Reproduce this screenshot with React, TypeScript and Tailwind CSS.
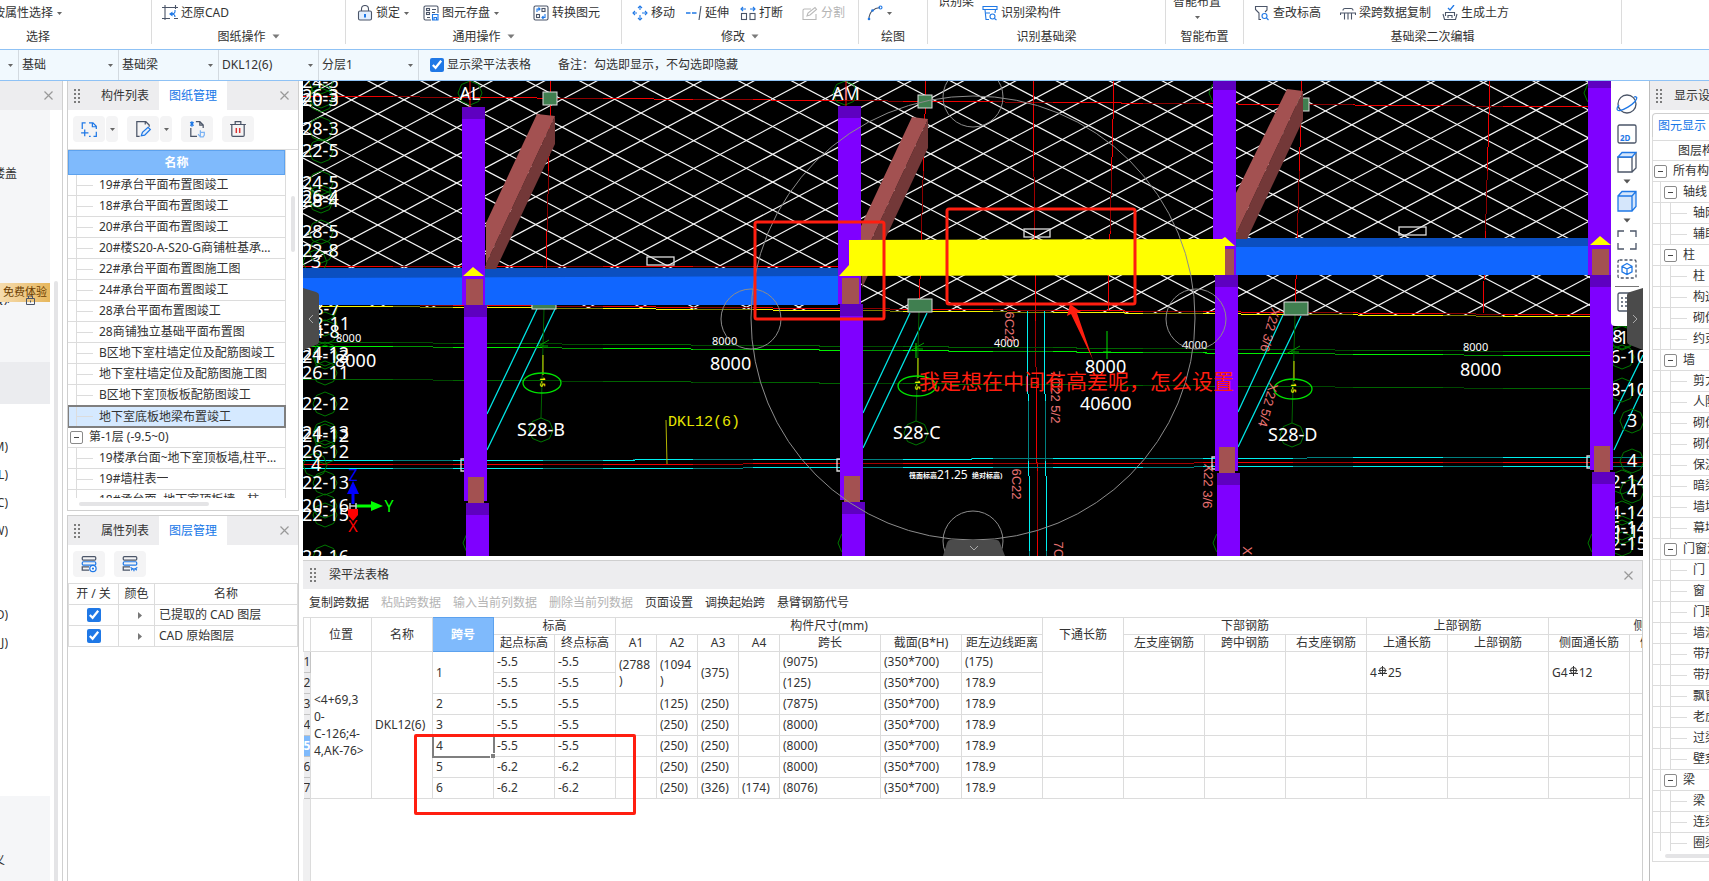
import { useState, ReactNode } from 'react';

type Point = [number, number];

const INK = '#4b5568';
const BLUE = '#1f78e6';

/* ---------- small shared pieces ---------- */

function Caret({ color = '#7a7a7a' }: { color?: string }) {
  return (
    <svg width="8" height="5" viewBox="0 0 8 5" className="shrink-0" aria-hidden="true">
      <path d="M0.5 0.5h7L4 4.5z" fill={color} />
    </svg>
  );
}

function SmallCaret() {
  return (
    <svg width="5" height="3" viewBox="0 0 5 3" className="shrink-0" aria-hidden="true">
      <path d="M0 0h5L2.5 3z" fill="#666" />
    </svg>
  );
}

function Grip() {
  return (
    <svg width="8" height="14" viewBox="0 0 8 14" className="shrink-0" aria-hidden="true">
      {[0, 4, 8, 12].map(y => (
        <g key={y} fill="#7c7c7c">
          <rect x="1" y={y} width="2" height="2" />
          <rect x="5" y={y} width="2" height="2" />
        </g>
      ))}
    </svg>
  );
}

function CloseButton() {
  return (
    <button aria-label="关闭" className="flex size-4 shrink-0 items-center justify-center">
      <svg width="9" height="9" viewBox="0 0 9 9" stroke="#999" strokeWidth="1.2">
        <path d="M0.5 0.5l8 8M8.5 0.5l-8 8" />
      </svg>
    </button>
  );
}

function Icon({ children, size = 16 }: { children: ReactNode; size?: number }) {
  return (
    <svg
      width={size}
      height={size}
      viewBox="0 0 16 16"
      fill="none"
      stroke={INK}
      strokeWidth="1.1"
      className="shrink-0"
      aria-hidden="true"
    >
      {children}
    </svg>
  );
}

/* ---------- icons ---------- */

const icons = {
  restore: (
    <Icon>
      <path d="M0 2.500h16M3 0v15M0 13.500h8M13.500 0v4M12 13.500h4" />
      <path d="M13 5v1.500Q13 9 9 9" stroke={BLUE} />
      <path d="M10.500 6.500v5L7 9z" fill={BLUE} stroke="none" />
      <path d="M10 9q3 0 3 3" stroke={BLUE} />
    </Icon>
  ),
  lock: (
    <Icon>
      <path d="M4.500 6V4a3.500 3.500 0 0 1 7 0v2" />
      <rect x="1.500" y="6" width="13" height="9" rx="1.500" fill="#e3effd" />
      <path d="M8 9v3.500" stroke={BLUE} strokeWidth="2" />
    </Icon>
  ),
  saveElement: (
    <Icon>
      <path d="M8 15H2.500A1.500 1.500 0 0 1 1 13.500v-11A1.500 1.500 0 0 1 2.500 1h11A1.500 1.500 0 0 1 15 2.500V8" />
      <rect x="3.500" y="3.500" width="3" height="2" />
      <rect x="3.500" y="7.500" width="3" height="2" />
      <path d="M9 4.500h4M9 7.500h3M4 12.500h3" />
      <path d="M9.500 9.500h5.500v5.500H9.500zM11 15v-2.500h2.500V15" stroke={BLUE} />
    </Icon>
  ),
  convert: (
    <Icon>
      <rect x="1" y="1" width="14" height="14" rx="1.500" />
      <rect x="9" y="3.500" width="3" height="3" />
      <rect x="3.500" y="9.500" width="3" height="3" />
      <path d="M4 7V4h3M5.500 2.500L7 4 5.500 5.500M12 9v3.500H9M10.500 11L9 12.500 10.500 14" stroke={BLUE} />
    </Icon>
  ),
  move: (
    <Icon>
      <g stroke={BLUE}>
        <path d="M8 1v5M8 10v5M1 8h5M10 8h5" strokeDasharray="4 1" />
        <path d="M6 3l2-2 2 2M6 13l2 2 2-2M3 6L1 8l2 2M13 6l2 2-2 2" />
      </g>
    </Icon>
  ),
  extend: (
    <Icon>
      <path d="M0 8h4.500M6 8h4.500" stroke={BLUE} strokeWidth="1.300" />
      <path d="M15 1l-2 14" />
    </Icon>
  ),
  split: (
    <Icon>
      <rect x="1.500" y="8.500" width="5" height="6" />
      <rect x="10" y="8.500" width="5" height="6" />
      <path d="M1 4h5M3 2L1 4l2 2M10 4h5M13 2l2 2-2 2" stroke={BLUE} />
    </Icon>
  ),
  divide: (
    <Icon>
      <g stroke="#b9b9b9">
        <path d="M9 4H2.500A1.500 1.500 0 0 0 1 5.500v9h13V9" />
        <path d="M5 11l1-3 7-5.500 1.500 2L8 10z" />
      </g>
    </Icon>
  ),
  arc: (
    <Icon>
      <path d="M2 14C2 7 7 3 13 2.500" />
      <circle cx="2" cy="14" r="1.300" fill={BLUE} stroke="none" />
      <circle cx="5.500" cy="5.500" r="1.300" fill={BLUE} stroke="none" />
      <circle cx="13.500" cy="2.500" r="1.500" stroke={BLUE} />
    </Icon>
  ),
  identify: (
    <Icon>
      <g stroke={BLUE}>
        <path d="M1 1.500h14v3H1zM3 4.500l1 10h3M13.500 4.500L13 8M4 8h4" />
        <circle cx="10.500" cy="11.500" r="2.500" />
        <path d="M12.500 13.500l2 1.500" />
      </g>
    </Icon>
  ),
  elevation: (
    <Icon>
      <path d="M7 14.500H5V8L1.500 4.500v-3H13V5L11 7" />
      <circle cx="10.500" cy="11" r="2.500" stroke={BLUE} />
      <path d="M12.500 13l2 2" stroke={BLUE} />
    </Icon>
  ),
  copySpan: (
    <Icon>
      <path d="M0.500 10V8h15v2M3 5.500q0-2 2-2h6q2 0 2 2M4.500 14.500V8M11.500 14.500V8M8 14.500V8" />
    </Icon>
  ),
  earth: (
    <Icon>
      <path d="M1 9l1.500 5.500h11L15 9M3.500 11V7.500h9V11M6 13v-2.500h4V13" />
      <path d="M6 3l2 2 4-5" stroke={BLUE} strokeWidth="1.300" />
    </Icon>
  ),
  addDrawing: (
    <Icon size={18}>
      <g stroke={BLUE}>
        <path d="M2 8V2.500h3M8 2.500h3.500L14.500 5.500V8M14.500 10.500v4H12M9.500 14.500H8M11 2.500v3.500h3.500M1 11.500h6.500M4.200 8.500v6" />
      </g>
    </Icon>
  ),
  editDrawing: (
    <Icon size={18}>
      <path d="M5 14.500H2.500v-13h8l3 3V6M10 1.500V4" />
      <path d="M6.500 14l1-3 5-4.500 2 2-5 5z" stroke={BLUE} fill="#e3effd" />
    </Icon>
  ),
  locate: (
    <Icon size={18}>
      <path d="M2.500 7v7.500H8M7 1.500h3.500l3 3V7M10.500 1.500v3h3" />
      <path d="M2 2l3 3M5 2L2 5M3.500 1v5" stroke={BLUE} />
      <path d="M10.500 14.500l-1.500-2M11 9v4M11 11h3.500v2.500l-1 1.500h-2.500z" stroke="#7db4f4" />
    </Icon>
  ),
  trash: (
    <Icon size={18}>
      <path d="M1 4h14M5.500 4V1.500h5V4M2.500 4v9.500a1 1 0 0 0 1 1h9a1 1 0 0 0 1-1V4" />
      <path d="M6.500 7v4.500M9.500 7v4.500" stroke="#d33" strokeWidth="1.300" />
    </Icon>
  ),
  layerOne: (
    <Icon size={18}>
      <rect x="2" y="1.500" width="12" height="3" rx="1" />
      <rect x="2" y="6" width="12" height="3" rx="1" stroke={BLUE} />
      <path d="M8 13.500H2v-3h6" />
      <circle cx="11.500" cy="12" r="2.800" stroke={BLUE} fill="#fff" />
      <circle cx="11.500" cy="12" r="1" fill={BLUE} stroke="none" />
    </Icon>
  ),
  layerTwo: (
    <Icon size={18}>
      <rect x="2" y="1.500" width="12" height="3" rx="1" />
      <rect x="2" y="6" width="12" height="3" rx="1" stroke={BLUE} />
      <path d="M8 13.500H2v-3h6" />
      <path d="M8.500 11q3 3 6 0M9 13.500l1-1M11.500 14.500v-2M14 13.500l-1-1" stroke={BLUE} />
    </Icon>
  )
};

/* ---------- ribbon ---------- */

function Tool({ icon, text, caret, muted }: { icon: ReactNode; text?: string; caret?: boolean; muted?: boolean }) {
  return (
    <button className={`flex shrink-0 items-center gap-[3px] whitespace-nowrap ${muted ? 'text-[#b4b4b4]' : ''}`}>
      {icon}
      {text}
      {caret && <span className="pl-px"><SmallCaret /></span>}
    </button>
  );
}

function RibbonGroup({ width, label, caret, children }: { width: string; label: string; caret?: boolean; children: ReactNode }) {
  return (
    <>
      <section className={`flex shrink-0 flex-col ${width}`}>
        <div className="flex h-[26px] items-center">{children}</div>
        <div className="flex h-[21px] items-center justify-center gap-1.5">
          {label}
          {caret && <Caret />}
        </div>
      </section>
      <div className="h-11 w-px shrink-0 bg-[#dcdcdc]" />
    </>
  );
}

function Ribbon() {
  return (
    <header className="flex h-[50px] shrink-0 overflow-hidden border-b border-[#8fc2f5] bg-white">
      <RibbonGroup width="-ml-[75px] w-[226px]" label="选择">
        <button className="flex w-[137px] items-center justify-end gap-1 whitespace-nowrap">按属性选择<SmallCaret /></button>
      </RibbonGroup>
      <RibbonGroup width="w-[193px]" label="图纸操作" caret>
        <div className="pl-2.5"><Tool icon={icons.restore} text="还原CAD" /></div>
      </RibbonGroup>
      <RibbonGroup width="w-[275px]" label="通用操作" caret>
        <div className="flex items-center gap-3.5 pl-[11px]">
          <Tool icon={icons.lock} text="锁定" caret />
          <Tool icon={icons.saveElement} text="图元存盘" caret />
          <div className="pl-5"><Tool icon={icons.convert} text="转换图元" /></div>
        </div>
      </RibbonGroup>
      <RibbonGroup width="w-[236px]" label="修改" caret>
        <div className="flex items-center gap-[11px] pl-2.5">
          <Tool icon={icons.move} text="移动" />
          <Tool icon={icons.extend} text="延伸" />
          <Tool icon={icons.split} text="打断" />
          <div className="pl-2"><Tool icon={icons.divide} text="分割" muted /></div>
        </div>
      </RibbonGroup>
      <RibbonGroup width="w-[68px]" label="绘图">
        <div className="pl-2"><Tool icon={icons.arc} caret /></div>
      </RibbonGroup>
      <RibbonGroup width="w-[237px]" label="识别基础梁">
        <button className="-mt-1.5 ml-2.5 self-start leading-4">识别梁</button>
        <div className="pl-2"><Tool icon={icons.identify} text="识别梁构件" /></div>
      </RibbonGroup>
      <RibbonGroup width="w-[77px]" label="智能布置">
        <button className="-mt-1.5 ml-[7px] flex flex-col items-center gap-1.5 self-start leading-4">
          智能布置
          <SmallCaret />
        </button>
      </RibbonGroup>
      <RibbonGroup width="w-[377px]" label="基础梁二次编辑">
        <div className="flex items-center gap-[11px] pl-2.5">
          <Tool icon={icons.elevation} text="查改标高" />
          <div className="pl-2"><Tool icon={icons.copySpan} text="梁跨数据复制" /></div>
          <Tool icon={icons.earth} text="生成土方" />
        </div>
      </RibbonGroup>
    </header>
  );
}

const FILTERS = [
  { label: '楼层', value: '基础' },
  { label: '构件类型', value: '基础梁' },
  { label: '构件', value: 'DKL12(6)' },
  { label: '分层', value: '分层1' }
];

function FilterBar() {
  const [showTable, setShowTable] = useState(true);
  return (
    <div className="flex h-[31px] shrink-0 items-stretch border-b border-[#8fc2f5] bg-[#f1f9fe]">
      <div className="flex w-[19px] items-center justify-end border-r border-[#d3dae0] pr-[5px]"><SmallCaret /></div>
      {FILTERS.map(f => (
        <div key={f.label} className="flex w-[100px] items-center border-r border-[#d3dae0] pr-[5px] pl-[3px]">
          <select aria-label={f.label} className="w-full appearance-none bg-transparent outline-none">
            <option>{f.value}</option>
          </select>
          <SmallCaret />
        </div>
      ))}
      <label className="flex items-center gap-[3px] pl-[11px]">
        <input
          type="checkbox"
          checked={showTable}
          onChange={e => setShowTable(e.target.checked)}
          className="size-3.5 accent-[#1f78e6]"
        />
        显示梁平法表格
      </label>
      <span className="flex items-center pl-[27px]">备注：勾选即显示，不勾选即隐藏</span>
    </div>
  );
}

/* ---------- left side ---------- */

const NAV_TAILS = ['(M)', '(L)', '(C)', '(W)', '', '', '(D)', '(J)'];

function NavStrip() {
  return (
    <aside className="flex w-[63px] shrink-0 flex-col border-r border-[#d0d0d0] bg-white">
      <div className="flex h-[29px] shrink-0 items-center justify-end bg-[#ededef] pr-1.5">
        <CloseButton />
      </div>
      <div className="flex flex-1 justify-between pr-1">
        <div className="flex w-[50px] flex-col">
          <div className="flex h-[252px] shrink-0 flex-col bg-[#f5f6f8] pt-14">
            <div className="flex w-[17px] justify-end overflow-hidden leading-4 whitespace-nowrap">现浇楼盖</div>
            <div className="relative mt-[101px] flex h-[19px] items-center bg-linear-to-r from-[#f6dcae] to-[#e6b65a] pl-[3px] whitespace-nowrap text-[#6b3d00]">
              <span className="text-[11px]">免费体验</span>
              <svg width="9" height="10" viewBox="0 0 9 10" className="absolute top-3 left-[26px]" fill="none" stroke={INK}>
                <path d="M0.500 3.500h8v6h-8zM2.500 3.500V1h4v2.500M4.500 5.500v2" />
              </svg>
            </div>
            <div className="flex h-[5px] w-3 items-end justify-end overflow-hidden leading-4">Q)/</div>
          </div>
          <div className="h-[42px] shrink-0 bg-[#ebecef]" />
          <div className="flex flex-1 flex-col pt-[29px]">
            {NAV_TAILS.map((tail, i) => (
              <div key={i} className="flex h-7 w-2 items-center justify-end overflow-hidden">{tail}</div>
            ))}
          </div>
          <div className="flex h-[85px] shrink-0 items-end bg-[#f5f6f8] pb-3">
            <span className="flex w-[5px] justify-end overflow-hidden whitespace-nowrap">自定义</span>
          </div>
        </div>
        <div className="mt-[171px] w-1 rounded-t bg-[#e4e4e6]" />
      </div>
    </aside>
  );
}

function PanelTabs({ tabs, active }: { tabs: string[]; active: number }) {
  return (
    <div className="flex h-[29px] shrink-0 items-center bg-[#ededef] pr-1.5 pl-[5px]">
      <Grip />
      <div className="ml-2.5 flex flex-1 self-stretch">
        {tabs.map((tab, i) => (
          <button
            key={tab}
            className={i === active ? 'w-[68px] bg-white text-[#1677e8]' : 'w-[68px]'}
          >
            {tab}
          </button>
        ))}
      </div>
      <CloseButton />
    </div>
  );
}

function IconButton({ icon, label, caret }: { icon: ReactNode; label: string; caret?: boolean }) {
  return (
    <div className="flex gap-px">
      <button aria-label={label} className="flex h-[26px] w-8 items-center justify-center rounded-sm bg-[#f4f4f5]">{icon}</button>
      {caret && (
        <button aria-label={`${label}选项`} className="flex h-[26px] w-3 items-center justify-center rounded-sm bg-[#f4f4f5]">
          <SmallCaret />
        </button>
      )}
    </div>
  );
}

function Expander() {
  return (
    <span className="flex size-[13px] shrink-0 items-center justify-center rounded-xs border border-[#8a8a8a] bg-white">
      <span className="h-px w-[5px] bg-[#444]" />
    </span>
  );
}

const DRAWINGS = [
  '19#承台平面布置图竣工',
  '18#承台平面布置图竣工',
  '20#承台平面布置图竣工',
  '20#楼S20-A-S20-G商铺桩基承台平面布置图',
  '22#承台平面布置图施工图',
  '24#承台平面布置图竣工',
  '28承台平面布置图竣工',
  '28商铺独立基础平面布置图',
  'B区地下室柱墙定位及配筋图竣工',
  '地下室柱墙定位及配筋图施工图',
  'B区地下室顶板板配筋图竣工',
  '地下室底板地梁布置竣工'
];

const UPPER_DRAWINGS = ['19楼承台面~地下室顶板墙,柱平面布置图', '19#墙柱表一', '18#承台面~地下室顶板墙，柱'];

function DrawingRow({ name, selected, onSelect }: { name: string; selected?: boolean; onSelect?: () => void }) {
  return (
    <li
      onClick={onSelect}
      className={`flex h-[21px] shrink-0 items-center pr-1 pl-2 ${
        selected ? 'bg-[#d5e9ff] outline-2 -outline-offset-1 outline-[#7f7f7f]' : 'border-b border-[#dcdcdc]'
      }`}
    >
      <span className="flex h-full w-[23px] shrink-0 items-center border-l border-[#dcdcdc]">
        <span className="h-px w-4 bg-[#dcdcdc]" />
      </span>
      <span className="truncate">{name}</span>
    </li>
  );
}

function DrawingPanel() {
  const [selected, setSelected] = useState('地下室底板地梁布置竣工');
  return (
    <section className="flex h-[430px] flex-col border border-t-0 border-[#cfcfcf] bg-white">
      <PanelTabs tabs={['构件列表', '图纸管理']} active={1} />
      <div className="flex h-10 shrink-0 items-start gap-[9px] border-b border-[#dcdcdc] pt-1.5 pl-[5px]">
        <IconButton icon={icons.addDrawing} label="添加图纸" caret />
        <IconButton icon={icons.editDrawing} label="编辑图纸" caret />
        <IconButton icon={icons.locate} label="定位图纸" />
        <IconButton icon={icons.trash} label="删除图纸" />
      </div>
      <div className="flex h-[348px] shrink-0 overflow-hidden">
        <div className="flex w-[218px] flex-col border-r border-[#dcdcdc]">
          <div className="flex h-[25px] shrink-0 items-center justify-center border border-[#5da2ee] bg-[#7fbafc] font-bold text-white">名称</div>
          <ul className="flex flex-col">
            {DRAWINGS.map(name => (
              <DrawingRow key={name} name={name} selected={name === selected} onSelect={() => setSelected(name)} />
            ))}
            <li className="flex h-[21px] shrink-0 items-center gap-1.5 border-b border-[#dcdcdc] pl-0.5">
              <Expander />
              第-1层 (-9.5~0)
            </li>
            {UPPER_DRAWINGS.map(name => <DrawingRow key={name} name={name} />)}
          </ul>
        </div>
        <div className="mt-[46px] ml-[5px] h-14 w-1 rounded bg-[#e4e4e6]" />
      </div>
      <div className="mt-1 ml-[11px] h-1 w-[130px] rounded bg-[#e4e4e6]" />
    </section>
  );
}

function LayerPanel() {
  return (
    <section className="flex flex-1 flex-col border border-b-0 border-[#cfcfcf] bg-white">
      <PanelTabs tabs={['属性列表', '图层管理']} active={1} />
      <div className="flex h-[38px] shrink-0 items-center gap-[9px] pl-[5px]">
        <IconButton icon={icons.layerOne} label="图层显示" />
        <IconButton icon={icons.layerTwo} label="图层隐藏" />
      </div>
      <table className="w-full table-fixed border-collapse text-left">
        <thead>
          <tr className="h-[21px]">
            <th className="w-[50px] border border-[#dcdcdc] text-center font-normal">开 / 关</th>
            <th className="w-9 border border-[#dcdcdc] text-center font-normal">颜色</th>
            <th className="border border-[#dcdcdc] text-center font-normal">名称</th>
          </tr>
        </thead>
        <tbody>
          {['已提取的 CAD 图层', 'CAD 原始图层'].map(name => (
            <tr key={name} className="h-[21px]">
              <td className="border border-[#dcdcdc]">
                <input type="checkbox" defaultChecked aria-label={name} className="mx-auto block size-3.5 accent-[#1f78e6]" />
              </td>
              <td className="border border-[#dcdcdc]">
                <svg width="4" height="7" viewBox="0 0 4 7" className="ml-[19px]"><path d="M0 0l4 3.500L0 7z" fill="#777" /></svg>
              </td>
              <td className="border border-[#dcdcdc] pl-1">{name}</td>
            </tr>
          ))}
        </tbody>
      </table>
    </section>
  );
}

/* ---------- model view ---------- */

const octagon = (cx: number, cy: number, r = 12) =>
  Array.from({ length: 8 }, (_, i) => {
    const a = (i * Math.PI) / 4;
    return `${(cx + r * Math.sin(a)).toFixed(1)},${(cy - r * Math.cos(a)).toFixed(1)}`;
  }).join(' ');

// CAD line: dark base with brighter stretches on top
function CadLine({ from, to, dark, bright }: { from: Point; to: Point; dark: string; bright: string }) {
  const p = { x1: from[0], y1: from[1], x2: to[0], y2: to[1], shapeRendering: 'crispEdges' };
  return (
    <>
      <line {...p} stroke={dark} />
      <line {...p} stroke={bright} strokeDasharray="90 60" />
    </>
  );
}

const HATCH_STEPS = Array.from({ length: 50 }, (_, i) => i - 22);
const hatchY = (x: number, slope: number, k: number) => 127 + slope * (x - 614.7) + 27.8 * k;

const COLUMNS = [
  { x: 462, top: 107, cap: 12, joint: 305, base: 503 },
  { x: 838, top: 106, cap: 12, joint: 304, base: 502 },
  { x: 1213, top: 81, cap: 9, joint: 275, base: 473 },
  { x: 1588, top: 81, cap: 7, joint: 275, base: 472 }
];

const BRACES = [
  { light: '537,114 555,116 486,264 486,223', dark: '555,116 555,144 496,269 485,269 486,264' },
  { light: '912,117 928,119 861,262 861,226', dark: '928,119 928,148 862,288 861,262' },
  { light: '1287,89 1303,91 1236,234 1236,193', dark: '1303,91 1303,120 1247,239 1236,239 1236,234' }
];

const PIERS = [
  { x: 543, y: 309, name: 'S28-B', tx: 517, oy: 430 },
  { x: 918, y: 312, name: 'S28-C', tx: 893, oy: 433 },
  { x: 1294, y: 315, name: 'S28-D', tx: 1268, oy: 435 }
];

const LEFT_MARKS: [number, number, string][] = [
  [302, 82, '24-3'], [302, 96, '26-3'], [302, 100, '20-3'], [302, 129, '28-3'], [302, 151, '22-5'],
  [302, 183, '24-5'], [302, 197, '26-4'], [302, 201, '28-4'], [302, 232, '28-5'], [302, 251, '22-8'],
  [311, 262, '3'], [303, 309, '28-7'], [303, 324, '22-11'], [303, 332, '24-8'],
  [302, 354, '24-12'], [302, 357, '21-13'], [302, 373, '26-11'], [302, 404, '22-12'], [302, 433, '24-13'],
  [302, 436, '21-12'], [302, 452, '26-12'], [311, 465, '4'], [302, 483, '22-13'], [302, 506, '20-16'],
  [302, 515, '22-15'], [302, 557, '22-16']
];

const RIGHT_MARKS: [number, number, string][] = [
  [1592, 338, '24-16'], [1602, 337, '18'], [1600, 357, '26-10'], [1600, 390, '28-10'], [1627, 421, '3'], [1627, 461, '4'],
  [1600, 482, '22-14'], [1627, 491, '4'], [1600, 513, '24-14'], [1600, 528, '26-14'], [1602, 532, '21-13'], [1600, 544, '22-15']
];

const BIG_DIMS: [number, number, string][] = [
  [335, 361, '8000'], [710, 364, '8000'], [1085, 367, '8000'], [1080, 404, '40600'], [1460, 370, '8000']
];

const SMALL_DIMS: [number, number, string][] = [
  [336, 338, '8000'], [712, 341, '8000'], [994, 343, '4000'], [1182, 345, '4000'], [1463, 347, '8000']
];

const BAR_NOTES: [number, number, string, number][] = [
  [1009, 327, '6C22', 90], [1016, 484, '6C22', 90], [1058, 557, '7C22', 90], [1055, 397, '7C22 5/2', 90],
  [1270, 330, 'X22 3/6', 105], [1268, 405, 'X22 5/4', 105], [1208, 486, 'X22 3/6', 92], [1247, 558, 'X22', 92]
];

function ModelDrawing() {
  return (
    <svg
      viewBox="303 81 1340 475"
      preserveAspectRatio="xMinYMin slice"
      className="block size-full font-['Noto_Sans','Noto_Sans_CJK_SC',sans-serif]"
      role="img"
      aria-label="基础梁三维视图"
    >
      <defs>
        <clipPath id="slab"><path d="M303 81H1590L1594 317L303 306Z" /></clipPath>
      </defs>

      <g clipPath="url(#slab)" stroke="#f6f6f6" strokeWidth="1.200">
        {HATCH_STEPS.map(k => (
          <g key={k}>
            <line x1="303" y1={hatchY(303, 0.525, k)} x2="1600" y2={hatchY(1600, 0.525, k)} />
            <line x1="303" y1={hatchY(303, -0.531, k)} x2="1600" y2={hatchY(1600, -0.531, k)} />
          </g>
        ))}
      </g>

      {/* axis grid */}
      <CadLine from={[303, 96]} to={[1588, 107]} dark="#8c0000" bright="#f00000" />
      <CadLine from={[303, 267]} to={[838, 266]} dark="#8c0000" bright="#f00000" />
      <CadLine from={[551, 81]} to={[546, 269]} dark="#8c0000" bright="#f00000" />
      <CadLine from={[926, 81]} to={[919, 312]} dark="#8c0000" bright="#f00000" />
      <CadLine from={[1033, 81]} to={[1038, 556]} dark="#a00000" bright="#f00000" />
      <CadLine from={[1114, 81]} to={[1108, 311]} dark="#8c0000" bright="#f00000" />
      <CadLine from={[1302, 81]} to={[1295, 312]} dark="#8c0000" bright="#f00000" />
      <CadLine from={[1490, 81]} to={[1483, 314]} dark="#8c0000" bright="#f00000" />
      <CadLine from={[303, 304]} to={[1592, 315]} dark="#8c0000" bright="#f00000" />
      <CadLine from={[303, 306]} to={[1592, 317]} dark="#808000" bright="#f5f500" />
      <CadLine from={[303, 342]} to={[1592, 352]} dark="#004c00" bright="#006400" />
      <CadLine from={[303, 346]} to={[1592, 356]} dark="#009600" bright="#00f000" />
      <CadLine from={[303, 379]} to={[1592, 389]} dark="#004600" bright="#006400" />
      <CadLine from={[303, 461]} to={[1643, 457]} dark="#008080" bright="#00f0f0" />
      <CadLine from={[303, 465]} to={[1643, 462]} dark="#a00000" bright="#f00000" />
      <CadLine from={[303, 469]} to={[1643, 466]} dark="#008080" bright="#00f0f0" />
      <CadLine from={[1027, 311]} to={[1030, 556]} dark="#008080" bright="#00f0f0" />
      <CadLine from={[1044, 311]} to={[1047, 556]} dark="#008080" bright="#00f0f0" />

      <g stroke="#00e4e4" strokeWidth="1.300">
        <path d="M537 309L487 414M555 309L487 450M910 313L863 413M927 313L863 448" />
        <path d="M1283 315L1238 412M1301 316L1238 447M1643 355L1614 414M1643 388L1614 450" />
      </g>

      {/* pier axes */}
      {PIERS.map(p => (
        <g key={p.name}>
          <line x1={p.x + 1} y1={p.y} x2={p.x - 2} y2={p.oy - 12} stroke="#006400" />
          <path d={`M${p.x - 8} ${p.y + 39}l14 -8M${p.x - 3} ${p.y + 37}h8`} stroke="#00a000" />
          <line x1={p.x} y1={p.y + 46} x2={p.x} y2={p.y + 66} stroke="#dede00" />
          <ellipse cx={p.x - 1} cy={p.y + 74} rx="19" ry="10" fill="none" stroke="#00e000" strokeWidth="1.300" />
          <text x={p.x - 1} y={p.y + 73} fontSize="7" fontWeight="700" fill="#f0f000" textAnchor="middle" dominantBaseline="central" transform={`rotate(90 ${p.x - 1} ${p.y + 73})`}>1-5</text>
          <polygon points={octagon(p.x - 2, p.oy)} fill="none" stroke="#007800" />
          <text x={p.tx} y={p.oy} dy="6" fontSize="18" fill="#fff">{p.name}</text>
        </g>
      ))}
      <path d="M1107 331V359M1103 352h8M916 343V358" stroke="#00e000" />

      {/* axis bubbles */}
      <g fill="none" stroke="#007800">
        {LEFT_MARKS.map(([x, y]) => <polygon key={`${x}-${y}`} points={octagon(x === 311 ? 315 : y > 300 ? 325 : 321, y)} />)}
        {RIGHT_MARKS.map(([x, y]) => <polygon key={`${x}-${y}`} points={octagon(x === 1627 ? 1632 : 1622, y)} />)}
        <polygon points={octagon(470, 93)} />
        <polygon points={octagon(845, 93)} />
        <polygon points={octagon(1221, 93)} />
        <polygon points={octagon(1596, 93)} />
        <polygon points={octagon(475, 543)} />
        <polygon points={octagon(850, 543)} />
        <polygon points={octagon(1225, 543)} />
        <polygon points={octagon(1600, 543)} />
      </g>
      <g fill="#fff" fontSize="18">
        {[...LEFT_MARKS, ...RIGHT_MARKS].map(([x, y, t]) => <text key={`${x}-${y}`} x={x} y={y} dy="6">{t}</text>)}
        <text x="470" y="100" textAnchor="middle">AL</text>
        <text x="846" y="100" textAnchor="middle">AM</text>
        {BIG_DIMS.map(([x, y, t]) => <text key={`${x}-${y}`} x={x} y={y} dy="6">{t}</text>)}
      </g>
      <g fill="#fff" fontSize="11">
        {SMALL_DIMS.map(([x, y, t]) => <text key={`${x}-${y}`} x={x} y={y} dy="4">{t}</text>)}
        <text x="909" y="478" fontSize="7" fontWeight="700">筏面标高</text>
        <text x="937" y="479" fontSize="12">21.25</text>
        <text x="972" y="478" fontSize="7" fontWeight="700">绝对标高)</text>
      </g>
      <path d="M470 81v26M846 81v26" stroke="#f00000" />

      <line x1="666" y1="420" x2="667" y2="464" stroke="#b4b400" />
      <text x="668" y="426" fontSize="15" fill="#e6e600" className="font-['Liberation_Mono',monospace]">DKL12(6)</text>

      <g fill="#e87272" fontSize="13" textAnchor="middle" className="font-['Liberation_Sans_Narrow','Liberation_Sans',sans-serif]">
        {BAR_NOTES.map(([x, y, t, r]) => (
          <text key={`${x}-${y}`} x={x} y={y} dominantBaseline="central" transform={`rotate(${r} ${x} ${y})`}>{t}</text>
        ))}
      </g>

      {/* column heads */}
      <g fill="#407f50" stroke="#dcdcdc">
        <rect x="543" y="92" width="14" height="13" />
        <rect x="918" y="95" width="14" height="13" />
        <rect x="1297" y="98" width="12" height="13" />
        <rect x="532" y="300" width="24" height="9" />
        <rect x="908" y="299" width="24" height="13" />
        <rect x="1284" y="302" width="24" height="13" />
      </g>
      <g fill="none" stroke="#dcdcdc" strokeWidth="1.300">
        <rect x="647" y="257" width="27" height="8" />
        <rect x="1024" y="229" width="26" height="8" />
        <rect x="1399" y="227" width="27" height="8" />
        <path d="M464 459h-3v12h3M840 459h-3v12h3M1215 457h-3v12h3M1590 456h-3v12h3" />
      </g>

      {/* beams */}
      <path d="M303 268H838V305H303Z" fill="#1066ff" />
      <path d="M303 268H838V276L303 278Z" fill="#0b4fc0" />
      <path d="M1236 238H1588V275H1236Z" fill="#1066ff" />
      <path d="M1236 238H1588V246L1236 247Z" fill="#0b4fc0" />

      {BRACES.map(b => (
        <g key={b.light}>
          <polygon points={b.dark} fill="#733838" />
          <polygon points={b.light} fill="#a35151" />
        </g>
      ))}

      {COLUMNS.map(c => (
        <g key={c.x} fill="#7f00ff">
          <rect x={c.x} y={c.top} width="23" height={c.joint - c.top} />
          <rect x={c.x} y={c.top} width="23" height={c.cap} fill="#5e00c0" />
          <rect x={c.x + 4} y={c.joint - 26} width="17" height="26" fill="#a35151" />
          <rect x={c.x + 2} y={c.joint} width="23" height={c.base - c.joint - 2} />
          <rect x={c.x + 2} y={c.joint} width="23" height="12" fill="#5e00c0" />
          <rect x={c.x + 6} y={c.base - 26} width="16" height="26" fill="#a35151" />
          <rect x={c.x + 4} y={c.base} width="23" height={556 - c.base} />
          <rect x={c.x + 4} y={c.base} width="23" height="12" fill="#5e00c0" />
        </g>
      ))}
      <path d="M463 276L473 267L484 276Z M1590 245L1600 236L1611 245Z" fill="#ff0" />
      <path d="M849 240L1222 239L1225 237L1235 246H1225V275L839 276L849 265Z" fill="#ff0" />

      {/* orbit ring */}
      <g fill="none" stroke="#8c8c8c">
        <circle cx="973" cy="318" r="222" />
        <circle cx="751" cy="319" r="30" />
        <circle cx="1196" cy="319" r="30" />
        <circle cx="973" cy="97" r="30" />
        <circle cx="973" cy="541" r="30" />
      </g>

      {/* axis gizmo */}
      <g strokeWidth="3">
        <path d="M353 504V490" stroke="#00f" />
        <path d="M353 481L359 494H347Z" fill="#00f" />
        <path d="M355 506H373" stroke="#0f0" />
        <path d="M371 501L383 506L371 511Z" fill="#0f0" />
        <path d="M348 509L358 509L358 515L353 521L348 515Z" fill="#f00" />
        <path d="M350 503v6M356 503v6M350 506h6" stroke="#c8c8c8" strokeWidth="1.500" />
      </g>
      <g fontSize="16" textAnchor="middle">
        <text x="353" y="481" fill="#00f">Z</text>
        <text x="389" y="512" fill="#0f0">Y</text>
        <text x="353" y="532" fill="#f00">X</text>
      </g>

      {/* review marks */}
      <g fill="none" stroke="#ff1e10" strokeWidth="3">
        <rect x="755" y="222" width="129" height="97" rx="2" />
        <rect x="947" y="209" width="188" height="95" rx="2" />
      </g>
      <path d="M1070 304L1067 316L1071 314L1093 360L1077 313L1081 312Z" fill="#ff1e10" />
      <text x="919" y="389" fontSize="21" fill="#ff1e10">我是想在中间有高差呢，怎么设置</text>
    </svg>
  );
}

function ViewTools() {
  return (
    <div className="absolute top-0 right-0 flex h-[245px] w-8 flex-col items-center rounded-bl bg-white pt-3">
      <button aria-label="动态观察">
        <svg width="22" height="22" viewBox="0 0 22 22" fill="none" strokeWidth="1.300">
          <circle cx="11" cy="11" r="9" stroke={INK} />
          <path d="M18 4c3-1 4 1 1 4.500S8 17 4 17.500 0.500 15 3 12" stroke={BLUE} />
        </svg>
      </button>
      <button aria-label="二维视图" className="mt-[9px]">
        <svg width="20" height="20" viewBox="0 0 20 20" fill="none">
          <rect x="1" y="1" width="18" height="18" rx="1.500" stroke={INK} strokeWidth="1.300" />
          <text x="3" y="17" fontSize="8" fontWeight="700" fill={BLUE}>2D</text>
        </svg>
      </button>
      <button aria-label="线框显示" className="mt-[7px] flex flex-col items-center gap-1.5">
        <svg width="20" height="22" viewBox="0 0 20 22" fill="none" strokeWidth="1.300">
          <path d="M1 6h14v15H1zM15 21l4-4V1.500" stroke={INK} />
          <path d="M1 6l4-4.500h14L15 6z" fill="#d5e6fb" stroke={BLUE} />
        </svg>
        <Caret color="#555" />
      </button>
      <button aria-label="实体显示" className="mt-1.5 flex flex-col items-center gap-1.5">
        <svg width="20" height="22" viewBox="0 0 20 22" fill="#d5e6fb" stroke={BLUE} strokeWidth="1.300">
          <path d="M1 6h14v15H1zM1 6l4-4.500h14v15L15 21M15 6l4-4.500" />
        </svg>
        <Caret color="#555" />
      </button>
      <button aria-label="全屏" className="mt-[7px]">
        <svg width="20" height="20" viewBox="0 0 20 20" fill="none" stroke={INK} strokeWidth="1.300">
          <path d="M1 7V1h6M13 1h6v6M19 13v6h-6M7 19H1v-6" />
        </svg>
      </button>
      <button aria-label="局部三维" className="mt-[9px]">
        <svg width="20" height="20" viewBox="0 0 20 20" fill="none" strokeWidth="1.300">
          <rect x="1" y="1" width="18" height="18" rx="1.500" stroke={INK} strokeDasharray="3 2" />
          <path d="M10 4.500l5 2.800v5.500l-5 2.800-5-2.800V7.300zM5 7.300l5 2.800 5-2.800M10 10v5.500" stroke={BLUE} />
        </svg>
      </button>
      <div className="mt-[7px] h-px w-6 shrink-0 bg-[#777]" />
      <button aria-label="显示设置" className="mt-[5px]">
        <svg width="20" height="20" viewBox="0 0 20 20" fill="none" stroke={INK} strokeWidth="1.300">
          <rect x="1" y="1" width="18" height="18" rx="1.500" />
          <path d="M4 6h2M8 6h8M4 10h2M8 10h8M4 14h2M8 14h8" />
        </svg>
      </button>
    </div>
  );
}

function ModelView() {
  return (
    <div className="relative min-h-0 flex-1 overflow-hidden bg-black">
      <ModelDrawing />
      <ViewTools />
      <button aria-label="收起左侧" className="absolute top-[207px] left-0">
        <svg width="16" height="62" viewBox="0 0 16 62">
          <path d="M0 0L13 4Q16 5 16 7V54Q16 56 13 57L0 62Z" fill="#4b4b4b" />
          <path d="M10 27l-4 4 4 4" fill="none" stroke="#aaa" />
        </svg>
      </button>
      <button aria-label="收起右侧" className="absolute top-[207px] right-0">
        <svg width="16" height="62" viewBox="0 0 16 62">
          <path d="M16 0L3 4Q0 5 0 7V54Q0 56 3 57L16 62Z" fill="#4b4b4b" />
          <path d="M6 27l4 4-4 4" fill="none" stroke="#aaa" />
        </svg>
      </button>
      <button aria-label="收起下方" className="absolute bottom-0 left-1/2">
        <svg width="62" height="16" viewBox="0 0 62 16" className="-ml-[30px]">
          <path d="M0 16L4 3Q5 0 7 0H54Q56 0 57 3L62 16Z" fill="#4b4b4b" />
          <path d="M27 6l4 4 4-4" fill="none" stroke="#aaa" />
        </svg>
      </button>
    </div>
  );
}

/* ---------- beam table ---------- */

const TABLE_ACTIONS = [
  { text: '复制跨数据' },
  { text: '粘贴跨数据', disabled: true },
  { text: '输入当前列数据', disabled: true },
  { text: '删除当前列数据', disabled: true },
  { text: '页面设置' },
  { text: '调换起始跨' },
  { text: '悬臂钢筋代号' }
];

const COL_WIDTHS = [7, 61, 61, 61, 61, 61, 41, 41, 41, 41, 101, 81, 81, 81, 81, 81, 81, 81, 101, 81, 137];

const SUB_HEADS = [
  '起点标高', '终点标高', 'A1', 'A2', 'A3', 'A4', '跨长', '截面(B*H)', '距左边线距离',
  '左支座钢筋', '跨中钢筋', '右支座钢筋', '上通长筋', '上部钢筋', '侧面通长筋'
];

// span, elevation, A2, A3, A4, length, edge distance
const SPANS = [
  ['2', '-5.5', '(125)', '(250)', '', '(7875)', '178.9'],
  ['3', '-5.5', '(250)', '(250)', '', '(8000)', '178.9'],
  ['4', '-5.5', '(250)', '(250)', '', '(8000)', '178.9'],
  ['5', '-6.2', '(250)', '(250)', '', '(8000)', '178.9'],
  ['6', '-6.2', '(250)', '(326)', '(174)', '(8076)', '178.9']
];

function Th({ children, ...rest }: { children?: ReactNode; colSpan?: number; rowSpan?: number }) {
  return <th {...rest} className="overflow-hidden border border-[#dcdcdc] p-0 font-normal whitespace-nowrap">{children}</th>;
}

function Td({ children, rowSpan }: { children?: ReactNode; rowSpan?: number }) {
  return <td rowSpan={rowSpan} className="overflow-hidden border border-[#dcdcdc] py-0 pr-0 pl-[3px] break-all">{children}</td>;
}

function RowNumber({ n, active }: { n: number; active?: boolean }) {
  return (
    <th
      className={`overflow-hidden border-r border-b border-[#c4c4c4] p-0 text-left ${
        active ? 'bg-[#7fbafc] font-bold text-white' : 'bg-[#ededef] font-normal'
      }`}
    >
      {n}
    </th>
  );
}

// HRB400 grade mark
function Rebar() {
  return (
    <svg width="11" height="12" viewBox="0 0 11 12" className="inline-block align-[-1px]" fill="none" stroke="#333">
      <path d="M5.500 0v10M1 7.500h9M1.500 4.500h8" />
      <ellipse cx="5.500" cy="4.500" rx="3" ry="3" />
    </svg>
  );
}

function BeamTable() {
  const [span, setSpan] = useState('4');
  return (
    <table className="w-[1463px] table-fixed border-collapse text-left leading-4">
      <colgroup>
        {COL_WIDTHS.map((w, i) => <col key={i} style={{ width: w }} />)}
      </colgroup>
      <thead className="text-center">
        <tr className="h-[17px]">
          <Th rowSpan={2} />
          <Th rowSpan={2}>位置</Th>
          <Th rowSpan={2}>名称</Th>
          <th rowSpan={2} className="border border-[#5da2ee] bg-[#7fbafc] p-0 font-bold text-white">跨号</th>
          <Th colSpan={2}>标高</Th>
          <Th colSpan={7}>构件尺寸(mm)</Th>
          <Th rowSpan={2}>下通长筋</Th>
          <Th colSpan={3}>下部钢筋</Th>
          <Th colSpan={2}>上部钢筋</Th>
          <Th colSpan={2}>侧面钢筋</Th>
        </tr>
        <tr className="h-[17px]">
          {SUB_HEADS.map(h => <Th key={h}>{h}</Th>)}
          <th className="border border-[#dcdcdc] p-0 pl-2.5 text-left font-normal">侧面原位标注筋</th>
        </tr>
      </thead>
      <tbody>
        <tr className="h-[21px]">
          <RowNumber n={1} />
          <td rowSpan={7} className="border border-[#dcdcdc] p-0 pl-[3px] leading-[17px]">
            &lt;4+69,3<br />0-<br />C-126;4-<br />4,AK-76&gt;
          </td>
          <Td rowSpan={7}>DKL12(6)</Td>
          <Td rowSpan={2}>1</Td>
          <Td>-5.5</Td>
          <Td>-5.5</Td>
          <Td rowSpan={2}>(2788<br />)</Td>
          <Td rowSpan={2}>(1094<br />)</Td>
          <Td rowSpan={2}>(375)</Td>
          <Td rowSpan={2} />
          <Td>(9075)</Td>
          <Td>(350*700)</Td>
          <Td>(175)</Td>
          <Td rowSpan={2} />
          <Td rowSpan={2} />
          <Td rowSpan={2} />
          <Td rowSpan={2} />
          <Td rowSpan={2}>4<Rebar />25</Td>
          <Td rowSpan={2} />
          <Td rowSpan={2}>G4<Rebar />12</Td>
          <Td rowSpan={2} />
        </tr>
        <tr className="h-[21px]">
          <RowNumber n={2} />
          <Td>-5.5</Td>
          <Td>-5.5</Td>
          <Td>(125)</Td>
          <Td>(350*700)</Td>
          <Td>178.9</Td>
        </tr>
        {SPANS.map(([no, elevation, a2, a3, a4, length, edge], i) => (
          <tr key={no} className="h-[21px]">
            <RowNumber n={i + 3} active={no === span} />
            <td
              onClick={() => setSpan(no)}
              className={`relative border border-[#dcdcdc] p-0 pl-[3px] ${
                no === span ? 'outline-2 -outline-offset-1 outline-[#7f7f7f]' : ''
              }`}
            >
              {no}
              {no === span && <span className="absolute -right-0.5 -bottom-0.5 size-[5px] border-t border-l border-white bg-[#7f7f7f]" />}
            </td>
            <Td>{elevation}</Td>
            <Td>{elevation}</Td>
            <Td />
            <Td>{a2}</Td>
            <Td>{a3}</Td>
            <Td>{a4}</Td>
            <Td>{length}</Td>
            <Td>(350*700)</Td>
            <Td>{edge}</Td>
            <Td /><Td /><Td /><Td /><Td /><Td /><Td /><Td />
          </tr>
        ))}
      </tbody>
    </table>
  );
}

function BeamPanel() {
  return (
    <section className="relative mt-1 flex h-[321px] shrink-0 flex-col overflow-hidden border-t border-r border-[#cfcfcf] bg-white">
      <div className="flex h-7 shrink-0 items-center bg-[#ededef] pr-1.5 pl-1.5">
        <Grip />
        <h2 className="flex-1 pl-3">梁平法表格</h2>
        <CloseButton />
      </div>
      <div className="flex h-7 shrink-0 items-center gap-3 pl-1.5">
        {TABLE_ACTIONS.map(a => (
          <button key={a.text} disabled={a.disabled} className="disabled:text-[#b4b4b4]">{a.text}</button>
        ))}
      </div>
      <BeamTable />
      <div className="w-2 flex-1 border-r border-[#dcdcdc] bg-[#f0f0f1]" />
      <div className="absolute top-[173px] left-[111px] h-[81px] w-[222px] rounded-xs border-3 border-[#ff1e10]" />
    </section>
  );
}

/* ---------- display settings ---------- */

const DISPLAY_TREE = [
  { group: '轴线', items: ['轴网', '辅助轴线'] },
  { group: '柱', items: ['柱', '构造柱', '砌体柱', '约束边缘非阴影区'] },
  { group: '墙', items: ['剪力墙', '人防门框墙', '砌体墙', '砌体加筋', '保温墙', '暗梁', '墙垛', '幕墙'] },
  { group: '门窗洞', items: ['门', '窗', '门联窗', '墙洞', '带形窗', '带形洞', '飘窗', '老虎窗', '过梁', '壁龛'] },
  { group: '梁', items: ['梁', '连梁', '圈梁'] }
];

function DisplayPanel() {
  return (
    <aside className="flex w-[60px] shrink-0 flex-col overflow-hidden border-l border-[#bdbdbd] bg-white whitespace-nowrap">
      <div className="flex h-[29px] shrink-0 items-center gap-[11px] bg-[#ededef] pl-[5px]">
        <Grip />
        <h2>显示设置</h2>
      </div>
      <div className="mt-[3px] ml-0.5 flex h-6 shrink-0">
        <button className="w-20 shrink-0 rounded-t-sm border border-b-0 border-[#cfcfcf] pl-[5px] text-left text-[#1677e8]">图元显示</button>
      </div>
      <div className="ml-0.5 flex h-[725px] shrink-0 flex-col border-b border-l border-[#dcdcdc]">
        <div className="mt-[3px] h-[21px] shrink-0 border-t border-b border-[#dcdcdc] pl-[25px] leading-5">图层构件</div>
        <ul className="flex h-[690px] shrink-0 flex-col overflow-hidden">
          <li className="flex h-[21px] shrink-0 items-center gap-1.5 border-b border-[#dcdcdc] pl-px"><Expander />所有构件</li>
          {DISPLAY_TREE.map(({ group, items }) => (
            <li key={group} className="shrink-0">
              <div className="flex h-[21px] items-center border-b border-[#dcdcdc] pl-[7px]">
                <span className="flex h-full items-center border-l border-[#dcdcdc] pl-[3px]"><Expander /></span>
                <span className="pl-1.5">{group}</span>
              </div>
              <ul>
                {items.map(item => (
                  <li key={item} className="flex h-[21px] items-center border-b border-[#dcdcdc] pl-[7px]">
                    <span className="h-full w-2.5 shrink-0 border-l border-[#dcdcdc]" />
                    <span className="flex h-full w-[23px] shrink-0 items-center border-l border-[#dcdcdc]">
                      <span className="h-px w-4 bg-[#dcdcdc]" />
                    </span>
                    {item}
                  </li>
                ))}
              </ul>
            </li>
          ))}
        </ul>
        <div className="mt-[3px] ml-3 h-1 w-20 rounded bg-[#e4e4e6]" />
      </div>
    </aside>
  );
}

function App() {
  return (
    <div className="flex h-screen flex-col overflow-hidden bg-white font-['Noto_Sans','Noto_Sans_CJK_SC',sans-serif] text-xs text-[#333]">
      <Ribbon />
      <FilterBar />
      <main className="flex min-h-0 flex-1">
        <NavStrip />
        <div className="ml-1 flex w-[232px] shrink-0 flex-col gap-1">
          <DrawingPanel />
          <LayerPanel />
        </div>
        <div className="mr-1.5 ml-1 flex min-w-0 flex-1 flex-col">
          <ModelView />
          <BeamPanel />
        </div>
        <DisplayPanel />
      </main>
    </div>
  );
}

export default App;
